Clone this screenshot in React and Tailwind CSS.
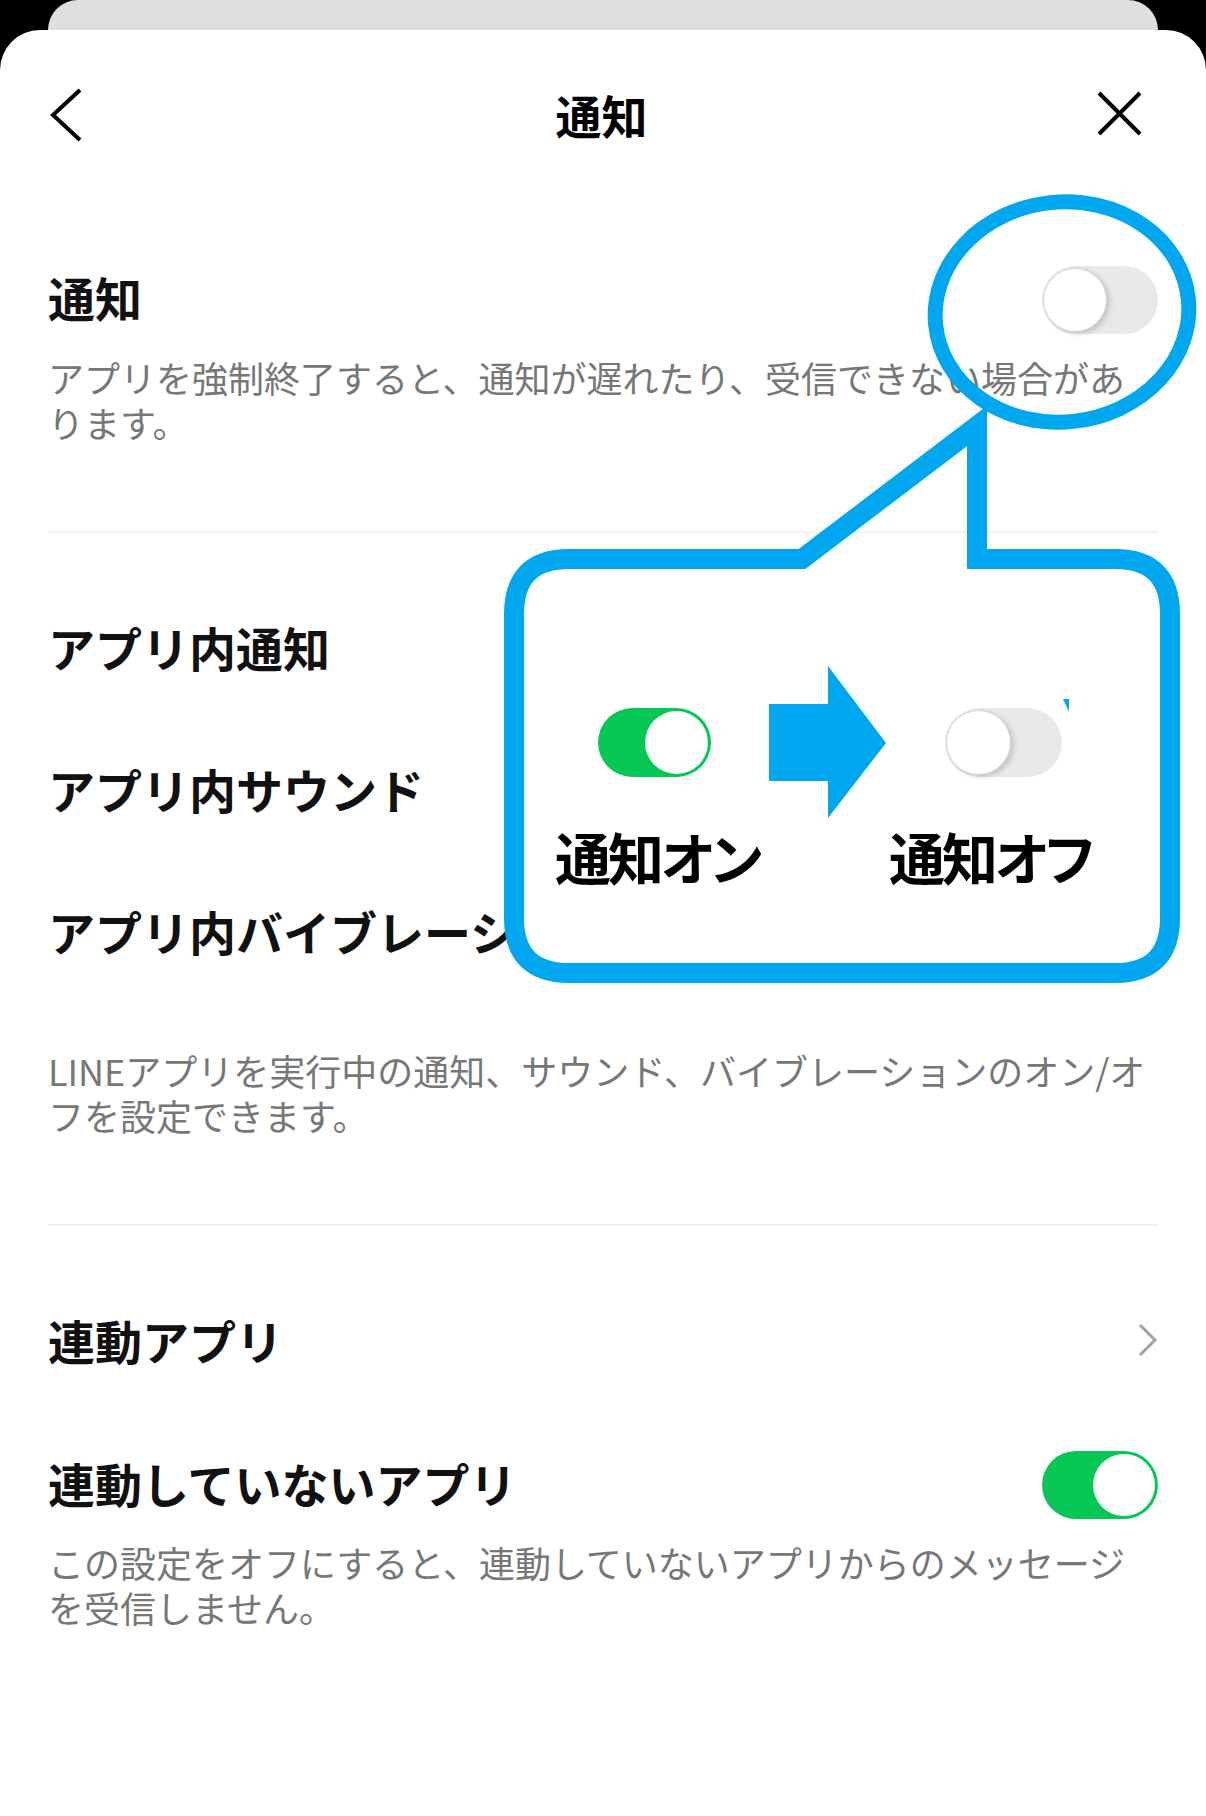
import React from "react";

const BLUE = "#00a7ee";

function ToggleOff({ w = 116, h = 68, k = 64 }) {
  return (
    <div
      className="flex items-center rounded-full bg-[#e9e9e9] shrink-0"
      style={{ width: w, height: h, paddingLeft: 1 }}
    >
      <div
        className="rounded-full bg-white border border-[#d6d6d6] shadow-[3px_2px_5px_rgba(0,0,0,0.16)]"
        style={{ width: k, height: k }}
      />
    </div>
  );
}

function ToggleOn({ w = 116, h = 68, k = 62 }) {
  return (
    <div
      className="flex items-center justify-end rounded-full bg-[#06c755] shrink-0"
      style={{ width: w, height: h, paddingRight: 3 }}
    >
      <div className="rounded-full bg-white" style={{ width: k, height: k }} />
    </div>
  );
}

function Desc({ children }) {
  return (
    <p className="text-[36px] leading-[45px] text-[#777777] font-normal">
      {children}
    </p>
  );
}

function Row({ children }) {
  return (
    <div className="flex h-[142px] items-center justify-between">
      {children}
    </div>
  );
}

function Label({ children, extra = "" }) {
  return (
    <span className={"text-[47px] leading-[60px] font-bold text-[#111111] whitespace-nowrap " + extra}>
      {children}
    </span>
  );
}

export default function App() {
  return (
    <div className="relative w-[1206px] h-[1816px] overflow-hidden bg-black font-['Noto_Sans_CJK_JP','Noto_Sans',sans-serif]">
      {/* background stacked card */}
      <div className="mx-[48px] h-[60px] rounded-t-[30px] bg-[#dfdfdf]" />

      {/* main sheet */}
      <div className="-mt-[30px] h-[1786px] rounded-t-[40px] bg-white">
        {/* header */}
        <div className="grid h-[168px] grid-cols-[1fr_auto_1fr] items-center pl-[45px] pr-[48px]">
          <div className="justify-self-start">
            <svg width="50" height="60" viewBox="0 0 50 60">
              <polyline
                points="35,6 8,31 35,56"
                fill="none"
                stroke="#000"
                strokeWidth="4"
              />
            </svg>
          </div>
          <h1 className="text-[46px] leading-[60px] font-bold text-black">通知</h1>
          <div className="justify-self-end mr-[12px]">
            <svg width="54" height="54" viewBox="0 0 54 54">
              <path d="M7 6 L48 47 M48 6 L7 47" stroke="#000" strokeWidth="4" fill="none" />
            </svg>
          </div>
        </div>

        <div className="px-[48px]">
          {/* section 1 */}
          <div className="pt-[68px]">
            <div className="flex h-[68px] items-center justify-between">
              <Label extra="mb-[6px]">通知</Label>
              <ToggleOff />
            </div>
            <div className="mt-[21px]">
              <Desc>アプリを強制終了すると、通知が遅れたり、受信できない場合があります。</Desc>
            </div>
          </div>
          <div className="mt-[86px] h-[2px] bg-[#f1f1f1]" />

          {/* section 2 */}
          <div className="mt-[43px]">
            <Row>
              <Label>アプリ内通知</Label>
            </Row>
            <Row>
              <Label>アプリ内サウンド</Label>
            </Row>
            <Row>
              <Label>アプリ内バイブレーション</Label>
            </Row>
            <div className="mt-[46px]">
              <Desc>LINEアプリを実行中の通知、サウンド、バイブレーションのオン/オフを設定できます。</Desc>
            </div>
          </div>
          <div className="mt-[86px] h-[2px] bg-[#f1f1f1]" />

          {/* section 3 */}
          <div className="mt-[43px]">
            <Row>
              <Label>連動アプリ</Label>
              <svg width="24" height="34" viewBox="0 0 24 34" className="mr-[-2px]">
                <polyline points="4,2 19,17 4,32" fill="none" stroke="#a3a3a3" strokeWidth="3" />
              </svg>
            </Row>
            <div className="mt-[40px] flex h-[68px] items-center justify-between">
              <Label extra="mb-[5px]">連動していないアプリ</Label>
              <ToggleOn />
            </div>
            <div className="mt-[21px]">
              <Desc>この設定をオフにすると、連動していないアプリからのメッセージを受信しません。</Desc>
            </div>
          </div>
        </div>
      </div>

      {/* annotation drawing overlay */}
      <svg
        className="absolute left-0 top-0 z-10 pointer-events-none"
        width="1206"
        height="1816"
        viewBox="0 0 1206 1816"
      >
        <path
          d="M569 559 L1115 559 Q1170 559 1170 614 L1170 918 Q1170 973 1115 973 L569 973 Q514 973 514 918 L514 614 Q514 559 569 559 Z"
          fill="#ffffff"
        />
        <path
          d="M569 559 L802 559 L977 426 L977 559 L1115 559 Q1170 559 1170 614 L1170 918 Q1170 973 1115 973 L569 973 Q514 973 514 918 L514 614 Q514 559 569 559 Z"
          fill="none"
          stroke={BLUE}
          strokeWidth="20"
          strokeLinejoin="miter"
          strokeMiterlimit="10"
        />
        <ellipse
          cx="1062"
          cy="312"
          rx="127"
          ry="110"
          fill="none"
          stroke={BLUE}
          strokeWidth="15"
          transform="rotate(-6 1062 312)"
        />
        <path d="M1063 699 L1069 699 L1069 712 Z" fill={BLUE} />
      </svg>

      {/* annotation content */}
      <div className="absolute left-[525px] top-[568px] z-20 w-[635px] h-[395px]">
        <div className="mt-[98px] flex h-[152px] items-center">
          <div className="ml-[73px]">
            <ToggleOn w={113} h={69} k={63} />
          </div>
          <svg width="117" height="152" viewBox="0 0 117 152" className="ml-[58px] shrink-0">
            <polygon points="0,38 59,38 59,0 117,77 59,152 59,115 0,115" fill={BLUE} />
          </svg>
          <div className="ml-[59px]">
            <ToggleOff w={117} h={69} k={65} />
          </div>
        </div>
        <div className="mt-[8px] flex text-[56px] leading-[60px] font-bold text-black tracking-[-3px] [font-feature-settings:'palt']">
          <span className="ml-[30px] w-[334px] whitespace-nowrap">通知オン</span>
          <span className="whitespace-nowrap">通知オフ</span>
        </div>
      </div>
    </div>
  );
}
